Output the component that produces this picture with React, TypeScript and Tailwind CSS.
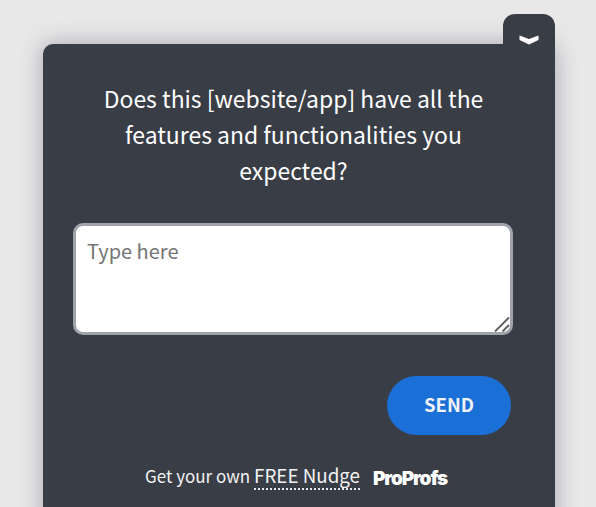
export default function App() {
  return (
    <div className="h-[507px] w-[596px] overflow-hidden bg-[#e8e8e8] pl-[43px] pt-[14px] font-['Noto_Sans_CJK_SC',sans-serif]">
      <div className="relative mt-[30px] h-[520px] w-[512px] rounded-t-[10px] bg-[#393d46] shadow-[0_0_22px_rgba(70,70,100,0.4)]">
        <button className="absolute right-0 top-[-30px] flex h-[40px] w-[52px] justify-center rounded-t-[12px] bg-[#393d46] pt-[21px]">
          <svg width="20" height="10" viewBox="0 0 20 10">
            <path d="M0.5 0.5 L10 4 L19.5 0.5 V5 L10 9.5 L0.5 5 Z" fill="#fff" />
          </svg>
        </button>
        <div className="flex flex-col pl-[30px] pr-[41px] pt-[36px]">
          <p className="text-center text-[22.95px] leading-[36px] text-white">
            Does this [website/app] have all the features and functionalities you expected?
          </p>
          <div className="relative mt-[35px] h-[112px] w-[440px]">
            <textarea
              placeholder="Type here"
              className="block h-full w-full resize-none rounded-[10px] border-[3px] border-[#a0a2ac] bg-white px-[11px] py-[11px] text-[20px] leading-[28px] text-[#333] outline-none placeholder:text-[#757575]"
            />
            <svg className="absolute bottom-[3px] right-[3px]" width="16" height="16" viewBox="0 0 16 16">
              <path d="M1 15.5 L15 1.5 M8.5 15.5 L15 9" stroke="#5f5f5f" strokeWidth="1.9" fill="none" />
            </svg>
          </div>
          <div className="mt-[41px] flex justify-end pr-[3px]">
            <button className="flex h-[59px] w-[124px] items-center justify-center rounded-full bg-[#1a70d6] pb-[1px] text-[18.5px] font-bold text-[#f0f2f5]">
              SEND
            </button>
          </div>
          <div className="mt-[24px] flex items-center pl-[72px] text-[17px] leading-[28px] text-[#f3f3f3]">
            <span>Get your own&nbsp;</span>
            <span className="border-b-2 border-dotted border-[#e8e8e8] text-[18.8px] leading-[26px]">FREE Nudge</span>
            <span className="ml-[13px] pt-[6px] font-['Inter',sans-serif] text-[19px] font-black tracking-[-1.1px] text-white">ProProfs</span>
          </div>
        </div>
      </div>
    </div>
  );
}
